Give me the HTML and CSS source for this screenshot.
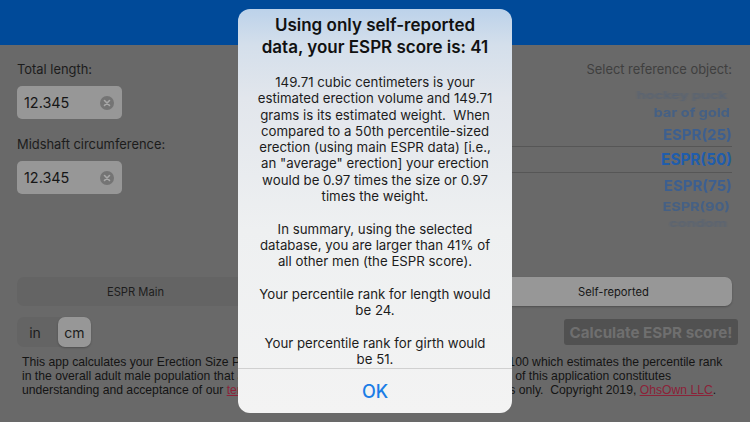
FILE: index.html
```html
<!DOCTYPE html>
<html lang="en">
<head>
<meta charset="utf-8">
<title>ESPR</title>
<link rel="stylesheet" href="styles.css">
</head>
<body>
<div class="app">
  <header class="topbar"></header>
  <main class="content">
    <div class="form-row">
      <section class="fields">
        <label class="field-label">Total length:</label>
        <div class="input">
          <span>12.345</span>
          <svg class="clear" viewBox="0 0 14 14" width="14" height="14"><circle cx="7" cy="7" r="7" fill="#747474"/><path d="M4.5 4.5l5 5M9.5 4.5l-5 5" stroke="#a8a8a8" stroke-width="1.6" stroke-linecap="round"/></svg>
        </div>
        <label class="field-label second">Midshaft circumference:</label>
        <div class="input">
          <span>12.345</span>
          <svg class="clear" viewBox="0 0 14 14" width="14" height="14"><circle cx="7" cy="7" r="7" fill="#747474"/><path d="M4.5 4.5l5 5M9.5 4.5l-5 5" stroke="#a8a8a8" stroke-width="1.6" stroke-linecap="round"/></svg>
        </div>
      </section>
      <section class="picker">
        <div class="field-label picker-title">Select reference object:</div>
        <ul class="wheel">
          <li class="w3">hockey puck</li>
          <li class="w2">bar of gold</li>
          <li class="w1">ESPR(25)</li>
          <li class="w0">ESPR(50)</li>
          <li class="w1">ESPR(75)</li>
          <li class="w2 w2b">ESPR(90)</li>
          <li class="w3">condom</li>
        </ul>
      </section>
    </div>
    <div class="segments">
      <div class="seg">ESPR Main</div>
      <div class="seg"></div>
      <div class="seg selected">Self-reported</div>
    </div>
    <div class="action-row">
      <div class="units">
        <div class="unit">in</div>
        <div class="unit selected">cm</div>
      </div>
      <button class="calc">Calculate ESPR score!</button>
    </div>
    <p class="blurb">This app calculates your Erection Size Percentile Rank (ESPR), a score ranging from 0 to 100 which estimates the percentile rank<br>in the overall adult male population that a given erection of this size would fall into. Any use of this application constitutes<br>understanding and acceptance of our <a href="#">terms and conditions</a>, and for entertainment purposes only.&nbsp; Copyright 2019, <a href="#">OhsOwn LLC</a>.</p>
  </main>
  <div class="alert">
    <div class="alert-body">
      <h1>Using only self-reported<br>data, your ESPR score is: 41</h1>
      <p>149.71 cubic centimeters is your<br>estimated erection volume and 149.71<br>grams is its estimated weight.&nbsp; When<br>compared to a 50th percentile-sized<br>erection (using main ESPR data) [i.e.,<br>an "average" erection] your erection<br>would be 0.97 times the size or 0.97<br>times the weight.</p>
      <p>In summary, using the selected<br>database, you are larger than 41% of<br>all other men (the ESPR score).</p>
      <p>Your percentile rank for length would<br>be 24.</p>
      <p>Your percentile rank for girth would<br>be 51.</p>
    </div>
    <div class="alert-action">OK</div>
  </div>
</div>
</body>
</html>
```
FILE: styles.css
```css
* { box-sizing: border-box; }
html, body { margin: 0; padding: 0; }
body { width: 750px; height: 422px; overflow: hidden; background: #696969; font-family: "Inter", "Liberation Sans", sans-serif; }
.app { position: relative; width: 750px; height: 422px; }
.topbar { height: 45px; background: #004a99; }
.content { padding: 17px 18px 0 17px; }
.form-row { display: flex; justify-content: space-between; height: 215px; }
.field-label { font-size: 12.9px; line-height: 16px; color: #1c1c1c; }
.field-label.second { display: block; margin-top: 18px; }
.fields .field-label:first-child { display: block; }
.input { display: flex; align-items: center; justify-content: space-between; width: 105px; height: 33px; margin-top: 8px; padding: 0 8px 0 7px; background: #979797; border-radius: 5px; font-size: 14.4px; color: #161616; }
.picker { display: flex; flex-direction: column; align-items: flex-end; width: 220px; }
.picker-title { color: #3f3f3f; }
.wheel { list-style: none; margin: 10px 0 0; padding: 0; width: 100%; text-align: right; font-weight: 700; }
.wheel li { display: flex; align-items: center; justify-content: flex-end; }
.w0 { height: 27px; font-size: 15.3px; color: #205dac; border-top: 1px solid #565656; border-bottom: 1px solid #565656; }
.w1 { height: 24px; font-size: 15px; color: #3c5f90; filter: blur(.4px); }
.w2 { height: 19px; font-size: 14.5px; color: #456084; filter: blur(.5px); padding-right: 2px; transform: scaleY(.85); }
.w3 { height: 15px; font-size: 14.5px; color: #5a6472; filter: blur(.8px); padding-right: 5px; transform: scaleY(.7); }
.segments { display: flex; height: 29px; background: #646464; border-radius: 7px; }
.seg { flex: 1; display: flex; align-items: center; justify-content: center; font-size: 11.2px; color: #1d1d1d; border-radius: 7px; }
.seg.selected { background: #979797; box-shadow: 0 1px 2px rgba(0,0,0,.25); color: #161616; padding-left: 4px; }
.action-row { display: flex; justify-content: space-between; align-items: center; margin-top: 11px; margin-right: -6px; }
.units { display: flex; width: 74px; height: 30px; background: #646464; border-radius: 7px; }
.unit { flex: 1; display: flex; align-items: center; justify-content: center; font-size: 14px; color: #1c1c1c; border-radius: 7px; }
.unit:first-child { flex: 0 0 41px; padding-right: 5px; }
.unit.selected { background: #979797; box-shadow: 0 1px 2px rgba(0,0,0,.25); }
.calc { width: 174px; height: 26px; padding: 0; border: 0; border-radius: 3px; background: #515151; color: #6f6f6f; font: 700 15.2px "Inter", "Liberation Sans", sans-serif; }
.blurb { margin: 0; margin-top: 8px; padding-left: 5px; font-family: "Liberation Sans", sans-serif; font-size: 12.2px; line-height: 14px; color: #141414; white-space: nowrap; }
.blurb a { color: #8c2238; }
.alert { position: absolute; left: 238px; top: 9px; width: 274px; height: 404px; border-radius: 12px; overflow: hidden; display: flex; flex-direction: column; background: linear-gradient(180deg, #bcd2ea 0, #d4dfeb 36px, #e2e6ec 90px, #eef0f1 220px, #f3f3f3 100%); }
.alert-body { height: 359px; overflow: hidden; padding-top: 5px; text-align: center; color: #1c1c1c; }
.alert-body h1 { margin: 0 0 16px; font-size: 17px; line-height: 22px; font-weight: 600; color: #111; white-space: nowrap; }
.alert-body p { margin: 0 0 16.3px; font-size: 13.25px; line-height: 16.3px; white-space: nowrap; }
.alert-action { flex: 1; display: flex; align-items: center; justify-content: center; border-top: 1px solid #d0d0d0; font-size: 18px; font-weight: 500; color: #1a7de6; }
```
